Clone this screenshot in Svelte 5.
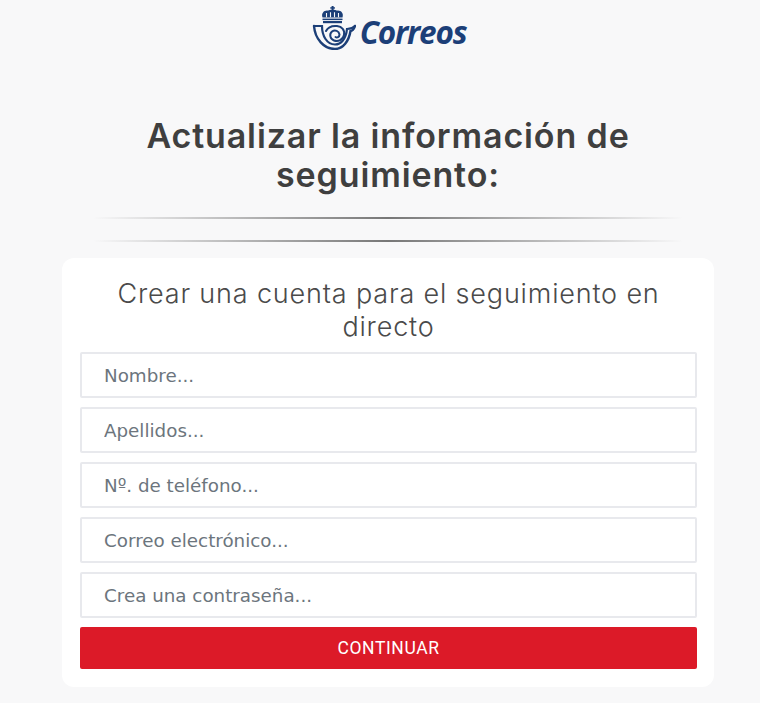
<script>
  const fields = [
    { name: "nombre", type: "text", hint: "Nombre..." },
    { name: "apellidos", type: "text", hint: "Apellidos..." },
    { name: "telefono", type: "tel", hint: "Nº. de teléfono..." },
    { name: "correo", type: "email", hint: "Correo electrónico..." },
    { name: "clave", type: "password", hint: "Crea una contraseña..." },
  ];
</script>

<div class="page">
  <header class="logo">
    <svg width="44" height="44" viewBox="0 0 44 44" fill="none" aria-hidden="true">
      <g fill="#1c3f78">
        <rect x="19.600" y="0" width="2" height="4.500" />
        <rect x="18.300" y="1.200" width="4.600" height="1.500" />
        <path d="M10.500 11.500c-1.500-4.500 2-7.500 5.500-6.800 1.600-1.200 7.400-1.200 9 0 3.500-.7 7 2.300 5.500 6.800z" />
        <rect x="10.500" y="12.600" width="20" height="1.500" />
        <rect x="11" y="15" width="19" height="2.200" />
      </g>
      <path d="M14.500 7v4.300M18.500 6.200v5.100M22.500 6.200v5.100M26.500 7v4.300" stroke="#f8f8f9" stroke-width="1.100" />
      <g stroke="#1c3f78" stroke-linecap="round">
        <path d="M2 20H10C10 30 15 38.500 23 38.500 29 38.500 34 33 35 23 38 23 41 22 43 20" stroke-width="2.200" />
        <path d="M2 20C3 33 12 43 23 43 31 43 37 35 38.500 25 40.500 25 42 23 43 20" stroke-width="2.400" />
        <path
          d="M14 25C16 21 20 19.500 25 20 30 20.500 33 24 32 29 31 34 26 36 22 34.500 18 33 17 28 20 25.500 23 23.500 27 25 27.500 28.500 27.500 31 25 32 23.500 31"
          stroke-width="2"
        />
      </g>
    </svg>
    <span class="wordmark">Correos</span>
  </header>

  <h1>Actualizar la información de seguimiento:</h1>

  <div class="rule"></div>
  <div class="rule"></div>

  <form class="card" onsubmit={(e) => e.preventDefault()}>
    <h2>Crear una cuenta para el seguimiento en directo</h2>
    {#each fields as f (f.name)}
      <input name={f.name} type="text" placeholder={f.hint} />
    {/each}
    <button type="submit">CONTINUAR</button>
  </form>
</div>

<style>
  :global(body) { margin: 0; background: #f8f8f9; }
  .page {
    width: 760px;
    height: 703px;
    box-sizing: border-box;
    overflow: hidden;
    padding: 6px 0 0 16px;
    display: flex;
    flex-direction: column;
    align-items: center;
    font-family: Roboto, "Liberation Sans", sans-serif;
  }
  .logo { display: flex; align-items: center; gap: 4px; height: 44px; margin-left: 2px; }
  .wordmark {
    font-family: "Open Sans", sans-serif;
    font-style: italic;
    font-weight: 700;
    font-size: 31.500px;
    letter-spacing: -1.200px;
    color: #1c3f78;
    margin-top: 6px;
  }
  h1 {
    width: 540px;
    margin: 66px 0 23px;
    text-align: center;
    font-family: Inter, sans-serif;
    font-size: 34px;
    line-height: 39px;
    letter-spacing: 0.870px;
    font-weight: 600;
    color: #3f3f3f;
  }
  .rule {
    width: 590px;
    height: 2px;
    margin-bottom: 21px;
    flex: none;
    background: linear-gradient(90deg, rgba(110, 110, 110, 0), #777 50%, rgba(110, 110, 110, 0));
  }
  .rule + .rule { margin-bottom: 16px; }
  .card {
    width: 652px;
    box-sizing: border-box;
    padding: 19px 17px 18px 18px;
    background: #fff;
    border-radius: 12px;
    display: flex;
    flex-direction: column;
  }
  h2 {
    margin: 0 0 9px;
    padding: 0 20px;
    text-align: center;
    font-family: Inter, sans-serif;
    font-size: 27px;
    line-height: 33px;
    letter-spacing: 0.830px;
    font-weight: 300;
    color: #4a4a4a;
  }
  input {
    height: 46px;
    box-sizing: border-box;
    margin-bottom: 9px;
    padding: 0 22px;
    border: 2px solid #e8e9ed;
    border-radius: 2px;
    background: #fff;
    font-family: "DejaVu Sans", sans-serif;
    font-size: 18.300px;
    color: #6c757d;
    outline: none;
  }
  input::placeholder { color: #6c757d; opacity: 1; }
  button {
    height: 42px;
    border: 0;
    border-radius: 2px;
    background: #dc1a28;
    color: #fff;
    font-family: Roboto, sans-serif;
    font-size: 17.500px;
    letter-spacing: 0.600px;
  }
</style>
